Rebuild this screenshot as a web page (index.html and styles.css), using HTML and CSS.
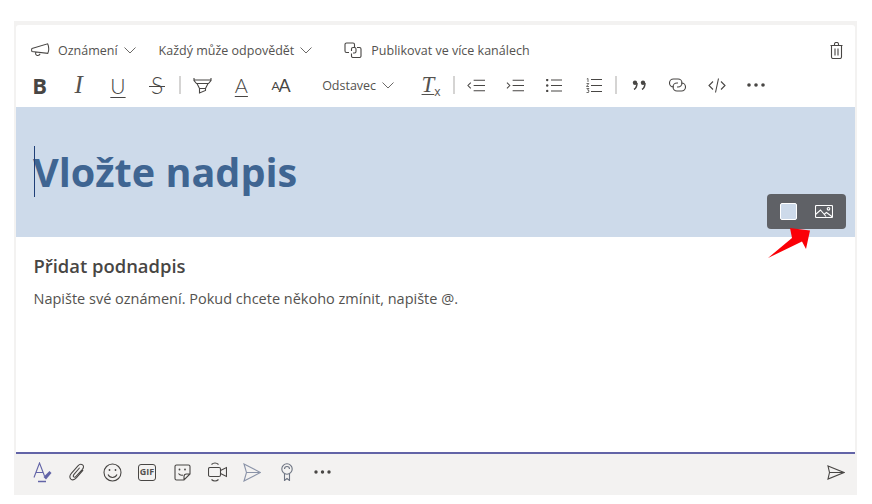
FILE: index.html
```html
<!DOCTYPE html>
<html lang="cs">
<head>
  <meta charset="UTF-8">
  <meta name="viewport" content="width=device-width, initial-scale=1.0">
  <title>Oznámení</title>
  <link rel="stylesheet" href="styles.css">
</head>
<body>
  <div class="frame">
    <div class="card">
      <!-- Horní lišta -->
      <div class="meta-row">
        <svg width="19" height="16" viewBox="0 0 20 16"><path d="M1 6.500 17.500 1.500c.8 1.500 1.200 3.500 1.200 5.500s-.3 3.200-1 4.500L1 9.500c-.5-1-.5-2 0-3ZM5 10.500c-.5 1.800.3 3 1.600 3.300 1.400.3 2.500-.4 3-1.800" /></svg>
        <span class="meta-text">Oznámení</span>
        <svg class="chev" width="12" height="7" viewBox="0 0 12 7"><path d="M.5.5 6 6 11.500.5" /></svg>
        <span class="meta-text reply">Každý může odpovědět</span>
        <svg class="chev" width="12" height="7" viewBox="0 0 12 7"><path d="M.5.5 6 6 11.500.5" /></svg>
        <svg class="cross" width="18" height="16" viewBox="0 0 18 16"><path d="M5 10.500H2.500A1.500 1.500 0 0 1 1 9V2.500A1.500 1.500 0 0 1 2.500 1H9a1.500 1.500 0 0 1 1.500 1.500V5M13 5.500h2.500A1.500 1.500 0 0 1 17 7v7a1.500 1.500 0 0 1-1.500 1.500H9A1.500 1.500 0 0 1 7.500 14v-2.500M7.500 9V7A1.500 1.500 0 0 1 9 5.500h1.500A1.500 1.500 0 0 1 12 7v2.500A1.500 1.500 0 0 1 10.500 11H9" /></svg>
        <span class="meta-text publish">Publikovat ve více kanálech</span>
        <svg class="trash" width="13" height="17" viewBox="0 0 13 17"><path d="M.5 3.500h12M1.500 3.500v11.500a1.500 1.500 0 0 0 1.500 1.500h7a1.500 1.500 0 0 0 1.500-1.500V3.500M4.500 3.500V2a1.500 1.500 0 0 1 1.500-1.500h1a1.500 1.500 0 0 1 1.500 1.500v1.500M5 6.500v7M8 6.500v7" /></svg>
      </div>

      <!-- Formátování -->
      <div class="format-row">
        <span class="btn bold">B</span>
        <span class="btn italic">I</span>
        <span class="btn light under">U</span>
        <span class="btn light strike"><span class="strike-line">S</span></span>
        <span class="sep"></span>
        <span class="btn narrow">
          <svg width="19" height="17" viewBox="0 0 18 17"><path d="M.5 1v2.500l2.500 3h12l2.500-3V1M.5 3h17M3.500 6.500l2.500 5h6l2.500-5M6 11.500v4.500l6-2.500v-2" /></svg>
        </span>
        <span class="btn light under color">A</span>
        <span class="btn light size"><small>A</small>A</span>
        <span class="paragraph">Odstavec</span>
        <svg class="chev" width="12" height="7" viewBox="0 0 12 7"><path d="M.5.5 6 6 11.500.5" /></svg>
        <span class="btn clear"><span class="clear-t">T</span><sub>x</sub></span>
        <span class="sep"></span>
        <span class="btn narrow">
          <svg width="18" height="13" viewBox="0 0 19 13"><path d="M7 1h12M7 6.500h12M7 12h12M4 3.500 1 6.500l3 3" /></svg>
        </span>
        <span class="btn">
          <svg width="18" height="13" viewBox="0 0 19 13"><path d="M7 1h12M7 6.500h12M7 12h12M1 3.500l3 3-3 3" /></svg>
        </span>
        <span class="btn">
          <svg width="16" height="13" viewBox="0 0 16 13"><path d="M5 1h11M5 6.500h11M5 12h11" /><circle cx="1.200" cy="1" r="1.200" class="fill" /><circle cx="1.200" cy="6.500" r="1.200" class="fill" /><circle cx="1.200" cy="12" r="1.200" class="fill" /></svg>
        </span>
        <span class="btn">
          <svg width="16" height="15" viewBox="0 0 16 15"><path d="M5 1.500h11M5 7.500h11M5 13.500h11" /><path d="M.8 1 2 .5v3.500M.5 5.500h2.300L.5 8.500h2.500M.5 10.500h2.500L1.500 12 3 12.700 2.500 14.500H.5" class="fine" /></svg>
        </span>
        <span class="sep"></span>
        <span class="btn narrow">
          <svg width="14" height="10" viewBox="0 0 14 10"><circle cx="3" cy="2.800" r="2.200" class="fill" /><circle cx="11" cy="2.800" r="2.200" class="fill" /><path d="M5 3c0 3-1.300 5.500-3 6.500M13 3c0 3-1.300 5.500-3 6.500" class="thick" /></svg>
        </span>
        <span class="btn">
          <svg width="17" height="14" viewBox="0 0 17 14"><path d="M5 9H4.500a4 4 0 0 1 0-8h4.500a4 4 0 0 1 0 8H8M12 5h.5a4 4 0 0 1 0 8H8a4 4 0 0 1 0-8h1" /></svg>
        </span>
        <span class="btn">
          <svg width="18" height="15" viewBox="0 0 18 15"><path d="M5 3.500 1 7.500l4 4M13 3.500l4 4-4 4M10.500 .5 7.500 14.500" /></svg>
        </span>
        <span class="btn">
          <svg width="18" height="4" viewBox="0 0 18 4"><circle cx="2" cy="2" r="1.800" class="fill" /><circle cx="9" cy="2" r="1.800" class="fill" /><circle cx="16" cy="2" r="1.800" class="fill" /></svg>
        </span>
      </div>

      <!-- Nadpis -->
      <div class="banner">
        <span class="caret"></span>
        <h1 class="title">Vložte nadpis</h1>
        <div class="banner-tools">
          <span class="swatch"></span>
          <svg width="18" height="13" viewBox="0 0 18 13"><rect x=".5" y=".5" width="17" height="12" rx="1" /><path d="M.5 9.500 5.500 5l5.500 6.500M9.500 9l2-1.500 6 4.500" /><circle cx="13.500" cy="3.800" r="1.300" /></svg>
        </div>
        <svg class="arrow" width="44" height="32" viewBox="0 0 44 32"><path d="M0 31 24 11 22 1 42 3.500 38 22 34 14.500Z" /></svg>
      </div>

      <div class="body">
        <h2 class="subtitle">Přidat podnadpis</h2>
        <p class="text">Napište své oznámení. Pokud chcete někoho zmínit, napište @.</p>
      </div>
    </div>

    <!-- Spodní lišta -->
    <div class="footer">
      <span class="tool">
        <svg class="format" width="19" height="21" viewBox="0 0 19 21"><path d="M1 15.500 6.500 1l5 13M3 10.500h7" /><path d="M10.500 15l6-6 2 2-5.500 6.500Z" class="fill" /><path d="M5 19.500h8" class="thick" /></svg>
      </span>
      <span class="tool">
        <svg width="16" height="18" viewBox="0 0 17 18"><path d="M15 7 8 15c-2 2.300-4.500 2.800-6 1.500C.5 15 .8 12.500 2.500 10.500L9.500 2.500C11 .8 13 .5 14.500 1.500 16 2.800 15.500 4.800 14 6.500L7.500 13.500c-.8 1-1.800 1.200-2.500.7-.7-.7-.5-1.700.3-2.700l6-7" /></svg>
      </span>
      <span class="tool">
        <svg width="19" height="19" viewBox="0 0 19 19"><circle cx="9.500" cy="9.500" r="8.500" /><path d="M5 11.500c1 2 2.500 3 4.500 3s3.500-1 4.500-3" /><circle cx="6.500" cy="7" r=".9" class="fill" /><circle cx="12.500" cy="7" r=".9" class="fill" /></svg>
      </span>
      <span class="tool"><span class="gif">GIF</span></span>
      <span class="tool">
        <svg width="17" height="17" viewBox="0 0 17 17"><path d="M10 16H2.500A1.500 1.500 0 0 1 1 14.500V2.500A1.500 1.500 0 0 1 2.500 1h12A1.500 1.500 0 0 1 16 2.500V10Zm0 0v-3.500A2.500 2.500 0 0 1 12.500 10H16" /><path d="M4.500 9.500c1 1.500 2.500 2 4.500 1.500" /><circle cx="5.500" cy="5.500" r=".9" class="fill" /><circle cx="11" cy="5.500" r=".9" class="fill" /></svg>
      </span>
      <span class="tool">
        <svg width="19" height="20" viewBox="0 0 19 20"><rect x=".5" y="5.500" width="12" height="9" rx="1.500" /><path d="M12.500 8.500l6-3v9l-6-3M3.500 2.500c2-2 5-2 7 0M3.500 17.500c2 2 5 2 7 0" /></svg>
      </span>
      <span class="tool">
        <svg class="pale" width="18" height="19" viewBox="0 0 18 19"><path d="M1 1 17.500 9.500 1 18l2.500-8.500ZM3.500 9.500h14" /></svg>
      </span>
      <span class="tool">
        <svg class="slate" width="12" height="18" viewBox="0 0 12 18"><circle cx="6" cy="6" r="5.200" /><path d="M3.500 11v6.500L6 15.500l2.500 2V11M3.500 6a2.500 2.500 0 0 1 5 0" /></svg>
      </span>
      <span class="tool">
        <svg width="17" height="4" viewBox="0 0 17 4"><circle cx="2" cy="2" r="1.700" class="fill" /><circle cx="8.500" cy="2" r="1.700" class="fill" /><circle cx="15" cy="2" r="1.700" class="fill" /></svg>
      </span>
      <svg class="send" width="18" height="15" viewBox="0 0 18 15"><path d="M1 1 17 7.500 1 14l1.500-6.500ZM2.500 7.500H17" /></svg>
    </div>
  </div>
</body>
</html>
```

FILE: styles.css
```css
/* Editor oznámení */
body {
  margin: 0;
  background-color: #fff;
  font-family: "Open Sans", "Noto Sans", sans-serif;
  color: #54524f;
}
svg {
  fill: none;
  stroke: #484644;
  stroke-width: 1.100;
  flex: none;
}
.fill {
  fill: #484644;
  stroke: none;
}
.fine {
  stroke-width: .8;
}
.thick {
  stroke-width: 1.500;
}
.frame {
  width: 843px;
  height: 474px;
  margin: 21px 0 0 14px;
  padding: 4px 2px 0;
  box-sizing: border-box;
  background-color: #f3f2f1;
  display: flex;
  flex-direction: column;
  overflow: hidden;
}
.card {
  height: 429px;
  flex: none;
  box-sizing: border-box;
  background-color: #fff;
  border-bottom: 2px solid #6264a7;
  border-radius: 3px 3px 0 0;
  display: flex;
  flex-direction: column;
}
.meta-row {
  height: 43px;
  flex: none;
  box-sizing: border-box;
  padding: 7px 12px 0 15px;
  display: flex;
  align-items: center;
}
.meta-text {
  font-size: 12.500px;
  margin-left: 8px;
  white-space: nowrap;
}
.reply {
  margin-left: 23px;
}
.publish {
  margin-left: 9px;
}
.chev {
  margin-left: 6px;
  stroke: #6b6967;
  stroke-width: 1;
}
.cross {
  margin-left: 32px;
}
.trash {
  margin-left: auto;
}
.format-row {
  height: 39px;
  flex: none;
  box-sizing: border-box;
  padding: 0 0 5px 4px;
  display: flex;
  align-items: center;
}
.btn {
  width: 39.200px;
  height: 26px;
  flex: none;
  display: flex;
  justify-content: center;
  align-items: center;
}
.btn.narrow {
  width: 43px;
  margin: 0 -2px;
}
.sep {
  width: 2px;
  height: 18px;
  flex: none;
  margin: 0 2px;
  background-color: #d5d4d3;
}
.bold {
  font-size: 22px;
  font-weight: 700;
  color: #484644;
}
.italic {
  font-family: "Liberation Serif", serif;
  font-style: italic;
  font-size: 25px;
}
.light {
  font-family: Lato, "Open Sans", sans-serif;
  font-weight: 300;
  color: #484644;
}
.under {
  font-size: 21px;
  text-decoration: underline;
  text-decoration-thickness: 1px;
  text-underline-offset: 3px;
}
.strike {
  font-size: 23px;
}
.strike-line {
  padding: 0 2px;
  background: linear-gradient(#484644, #484644) center 55% / 100% 1px no-repeat;
}
.color {
  font-size: 20px;
}
.size {
  font-size: 18px;
  font-weight: 400;
  letter-spacing: -1px;
}
.size small {
  font-size: 12px;
  align-self: flex-end;
  padding-bottom: 5px;
}
.paragraph {
  font-size: 12.500px;
  margin-left: 22px;
}
.clear {
  margin-left: 17.400px;
  font-family: "Liberation Serif", serif;
  font-size: 23px;
  font-style: italic;
}
.clear-t {
  text-decoration: underline;
  text-decoration-thickness: 1px;
  text-underline-offset: 2px;
}
.clear sub {
  font-family: "Open Sans", sans-serif;
  font-style: normal;
  font-size: 12px;
  line-height: 1;
  align-self: flex-end;
}
.banner {
  height: 130px;
  flex: none;
  box-sizing: border-box;
  padding: 40px 0 0 17px;
  background-color: #cddaea;
  position: relative;
}
.caret {
  position: absolute;
  left: 18px;
  top: 39px;
  width: 1px;
  height: 51px;
  background-color: #1f3f78;
}
.title {
  margin: 0;
  font-size: 39.600px;
  line-height: 50px;
  font-weight: 700;
  color: #3f6592;
}
.banner-tools {
  position: absolute;
  left: 751px;
  top: 87px;
  width: 79px;
  height: 35px;
  box-sizing: border-box;
  padding-left: 13px;
  border-radius: 4px;
  background-color: #5f6166;
  display: flex;
  align-items: center;
  gap: 18px;
}
.banner-tools svg {
  stroke: #fff;
}
.swatch {
  width: 17px;
  height: 17px;
  box-sizing: border-box;
  background-color: #cddaea;
  border: 1px solid #fff;
  border-radius: 2px;
}
.arrow {
  position: absolute;
  left: 752px;
  top: 120px;
  stroke: none;
  fill: #fb0007;
}
.body {
  padding: 15px 17.500px 0;
}
.subtitle {
  margin: 0;
  font-size: 18.400px;
  line-height: 28px;
  font-weight: 600;
  color: #484644;
}
.text {
  margin: 9px 0 0;
  font-size: 14.500px;
  line-height: 20px;
}
.footer {
  flex: 1;
  display: flex;
  align-items: center;
  padding: 0 10px 5px 8.500px;
}
.tool {
  width: 35px;
  flex: none;
  display: flex;
  justify-content: center;
}
.format {
  stroke: #6264a7;
}
.format .fill {
  fill: #6264a7;
}
.pale {
  stroke: #8a93a8;
}
.slate {
  stroke: #6d7482;
}
.gif {
  width: 18px;
  height: 17px;
  box-sizing: border-box;
  border: 1.500px solid #484644;
  border-radius: 3px;
  font-size: 9px;
  font-weight: 700;
  line-height: 14px;
  text-align: center;
}
.send {
  margin-left: auto;
}
```
